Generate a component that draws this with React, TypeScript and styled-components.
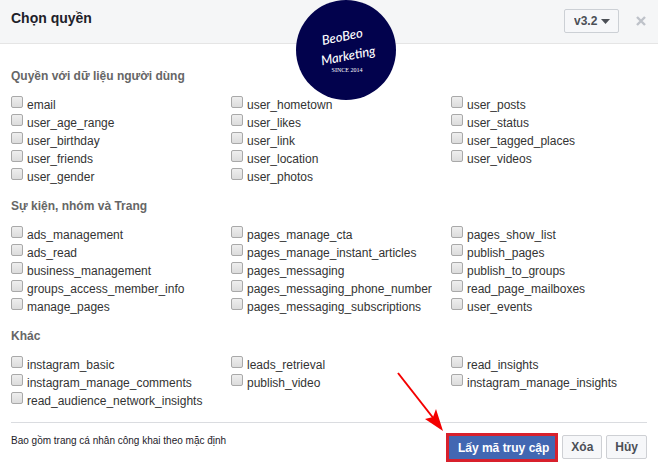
import React from "react";
import styled, { createGlobalStyle } from "styled-components";

const GlobalStyle = createGlobalStyle`
  *, *::before, *::after { box-sizing: border-box; }
  body {
    margin: 0;
    background: #fff;
    color: #1d2129;
    font-family: "Liberation Sans", Arial, sans-serif;
    font-size: 12px;
  }
`;

const Dialog = styled.section`
  position: relative;
  min-height: 100vh;
  background: #fff;
`;

const Header = styled.header`
  display: flex;
  align-items: center;
  height: 44px;
  padding: 0 11px 1px;
  background: #f5f6f7;
  border-bottom: 1px solid #e5e5e5;
`;

const Title = styled.h1`
  flex: 1;
  margin: 0;
  padding-bottom: 6px;
  font-size: 14px;
  line-height: 20px;
`;

const VersionPicker = styled.label`
  position: relative;
  display: flex;
  margin-right: 16px;
`;

const VersionSelect = styled.select`
  appearance: none;
  width: 55px;
  height: 24px;
  padding: 0 18px 0 9px;
  border: 1px solid #ccd0d5;
  border-radius: 2px;
  background: #f6f7f9;
  color: #4b4f56;
  font: bold 12px "Liberation Sans", Arial, sans-serif;
`;

const Caret = styled.svg`
  position: absolute;
  right: 9px;
  top: 10px;
  pointer-events: none;
`;

const CloseButton = styled.button`
  display: flex;
  padding: 1px;
  border: 0;
  background: none;
  color: #bec2c9;
`;

const Logo = styled.div`
  position: absolute;
  top: 0;
  left: 45%;
  width: 100px;
  height: 100px;
  border-radius: 50%;
  background: #02024d;
  overflow: hidden;
`;

const Body = styled.main`
  padding: 22px 11px 2px;
`;

const Group = styled.fieldset`
  min-width: 0;
  margin: 0;
  padding: 0 0 10px;
  border: 0;
`;

const GroupTitle = styled.legend`
  padding: 0 0 10px;
  color: #666;
  font-size: 12px;
  font-weight: bold;
  line-height: 20px;
`;

const Columns = styled.div`
  display: grid;
  grid-template-columns: repeat(3, minmax(0, 1fr));
  column-gap: 24px;
`;

const Permission = styled.label`
  display: flex;
  align-items: flex-start;
  gap: 4px;
  height: 18px;
  color: #333;
  line-height: 18px;
  white-space: nowrap;
`;

const Checkbox = styled.input`
  appearance: none;
  flex: none;
  width: 12px;
  height: 12px;
  margin: 0;
  border: 1px solid #a9a9a9;
  border-radius: 2px;
  background: linear-gradient(#eee, #dcdcdc);

  &:checked {
    background: #4267b2;
  }
`;

const Footer = styled.footer`
  display: flex;
  align-items: flex-start;
  gap: 4px;
  margin: 0 11px;
  padding-top: 10px;
  border-top: 1px solid #dadce0;
`;

const Note = styled.p`
  flex: 1;
  margin: 0;
  font-size: 10px;
  line-height: 16px;
`;

const Action = styled.button`
  height: 24px;
  margin-top: 2px;
  padding: 0 8px;
  border: 1px solid #ced0d4;
  border-radius: 2px;
  background: #f6f7f9;
  color: #4b4f56;
  font: bold 12px "Liberation Sans", Arial, sans-serif;
  white-space: nowrap;
`;

const PrimaryAction = styled(Action)`
  height: 29px;
  margin-top: 0;
  padding: 0 6px 0 9px;
  border: 3px solid #d8202c;
  border-radius: 0;
  background: #4267b2;
  color: #fff;
`;

const PrimarySlot = styled.div`
  position: relative;
  display: flex;
`;

const Pointer = styled.svg`
  position: absolute;
  right: 111px;
  bottom: 28px;
  pointer-events: none;
`;

const groups = [
  {
    title: "Quyền với dữ liệu người dùng",
    columns: [
      ["email", "user_age_range", "user_birthday", "user_friends", "user_gender"],
      ["user_hometown", "user_likes", "user_link", "user_location", "user_photos"],
      ["user_posts", "user_status", "user_tagged_places", "user_videos"],
    ],
  },
  {
    title: "Sự kiện, nhóm và Trang",
    columns: [
      ["ads_management", "ads_read", "business_management", "groups_access_member_info", "manage_pages"],
      [
        "pages_manage_cta",
        "pages_manage_instant_articles",
        "pages_messaging",
        "pages_messaging_phone_number",
        "pages_messaging_subscriptions",
      ],
      ["pages_show_list", "publish_pages", "publish_to_groups", "read_page_mailboxes", "user_events"],
    ],
  },
  {
    title: "Khác",
    columns: [
      ["instagram_basic", "instagram_manage_comments", "read_audience_network_insights"],
      ["leads_retrieval", "publish_video"],
      ["read_insights", "instagram_manage_insights"],
    ],
  },
];

export default function App() {
  return (
    <Dialog aria-labelledby="dialog-title">
      <GlobalStyle />
      <Header>
        <Title id="dialog-title">Chọn quyền</Title>
        <VersionPicker>
          <VersionSelect aria-label="v3.2" defaultValue="v3.2">
            <option>v3.2</option>
          </VersionSelect>
          <Caret width="9" height="5" viewBox="0 0 9 5" aria-hidden="true">
            <path d="M0 0h9L4.5 5z" fill="#4b4f56" />
          </Caret>
        </VersionPicker>
        <CloseButton type="button" aria-label="×">
          <svg width="10" height="10" viewBox="0 0 10 10" aria-hidden="true">
            <path d="M1 1l8 8M9 1l-8 8" stroke="currentColor" strokeWidth="2.4" />
          </svg>
        </CloseButton>
      </Header>
      <Logo>
        <svg width="100" height="100" viewBox="0 0 100 100">
          <g fill="#fff" textAnchor="middle">
            <g fontFamily="Lato, sans-serif" fontStyle="italic" fontWeight="500">
              <text fontSize="13" transform="translate(47 41) rotate(-11)">BeoBeo</text>
              <text fontSize="13" transform="translate(53 60) rotate(-11)">Marketing</text>
            </g>
            <text x="51" y="72" fontFamily="Liberation Serif, serif" fontSize="6">
              SINCE 2014
            </text>
          </g>
        </svg>
      </Logo>
      <Body>
        {groups.map((group) => (
          <Group key={group.title}>
            <GroupTitle>{group.title}</GroupTitle>
            <Columns>
              {group.columns.map((names) => (
                <div key={names[0]}>
                  {names.map((name) => (
                    <Permission key={name}>
                      <Checkbox type="checkbox" name={name} />
                      <span>{name}</span>
                    </Permission>
                  ))}
                </div>
              ))}
            </Columns>
          </Group>
        ))}
      </Body>
      <Footer>
        <Note>Bao gồm trang cá nhân công khai theo mặc định</Note>
        <PrimarySlot>
          <PrimaryAction type="button">Lấy mã truy cập</PrimaryAction>
          <Pointer width="50" height="62" viewBox="0 0 50 62" aria-hidden="true">
            <path d="M1 1l36 46" stroke="#f40000" strokeWidth="2" />
            <path d="M46 59L28 47l8-2 3-8z" fill="#f40000" />
          </Pointer>
        </PrimarySlot>
        <Action type="button">Xóa</Action>
        <Action type="button">Hủy</Action>
      </Footer>
    </Dialog>
  );
}
